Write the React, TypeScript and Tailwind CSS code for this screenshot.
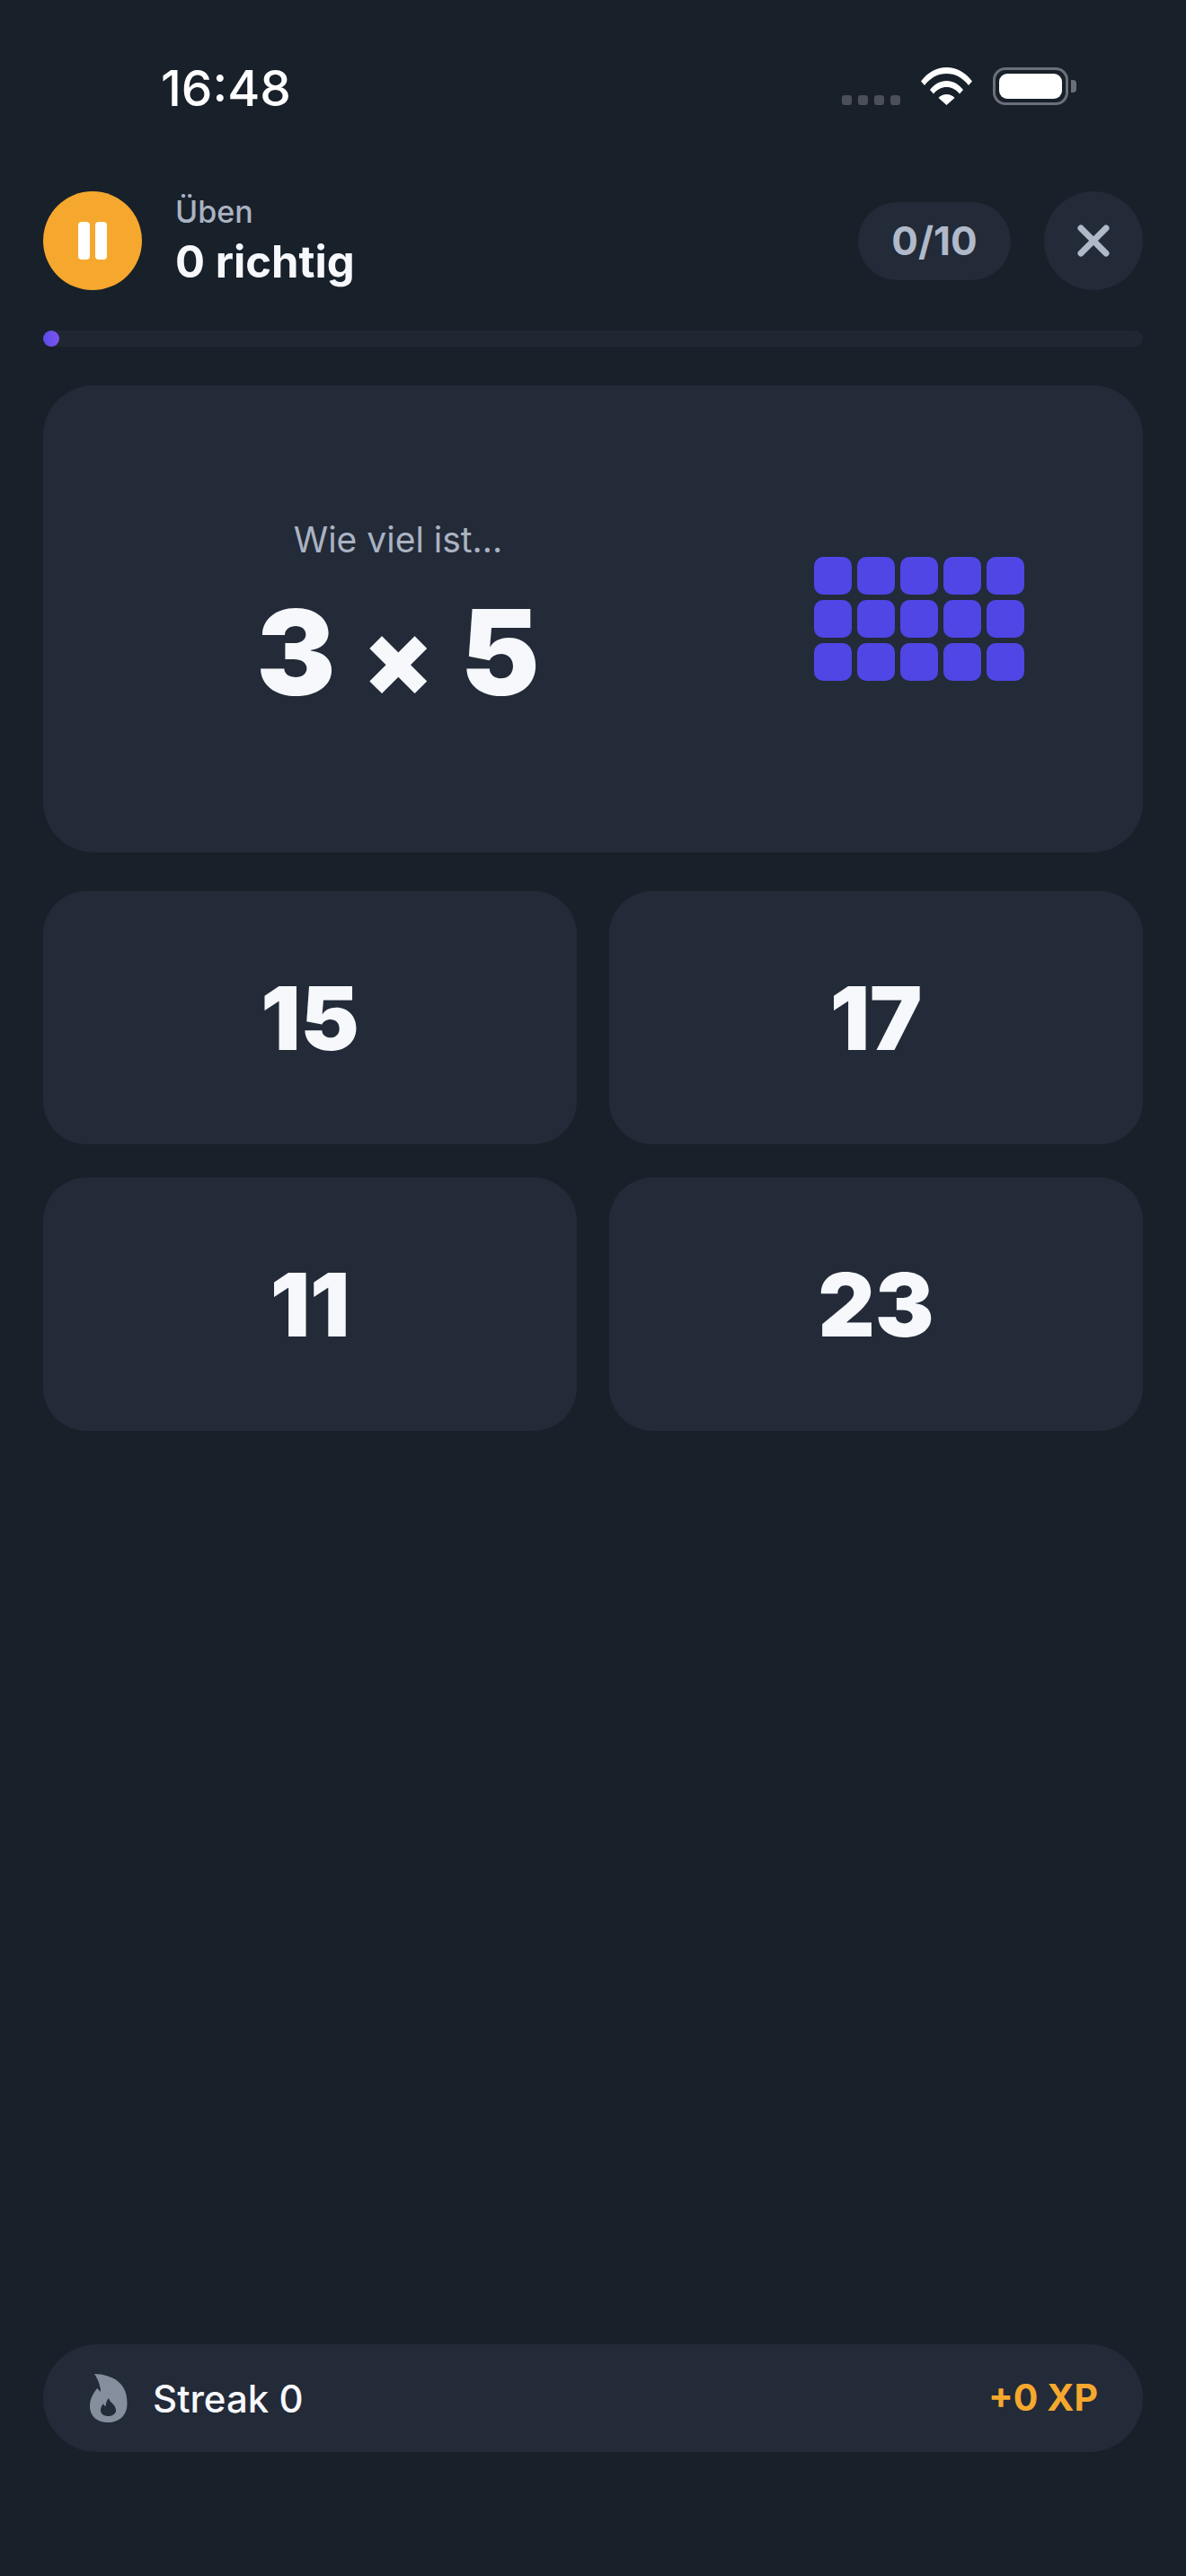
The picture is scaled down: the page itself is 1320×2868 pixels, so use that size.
import React from "react";

const inter = "font-['Inter',sans-serif]";

function StatusBar() {
    return (
        <div className="flex h-[190px] items-start pl-[179px] pr-[122px]">
            <span className="mt-[66px] text-[55px] leading-[64px] font-medium text-white">16:48</span>
            <div className="ml-auto flex items-end pt-[75px]">
                <div className="flex gap-[7px]">
                    {[0, 1, 2, 3].map((i) => (
                        <div key={i} className="h-[11px] w-[11px] rounded-[3px] bg-[#4a4f5a]" />
                    ))}
                </div>
                <svg className="ml-[23px]" width="57" height="42" viewBox="0 0 57 42" fill="#ffffff">
                    <path d="M0 15.5C7.5 5.5 17.5 0 28.5 0S49.5 5.500 57 15.5L53 20C46.500 11.500 38 7 28.5 7S10.500 11.500 4 20Z" />
                    <path d="M10 25C15 18.500 21.500 15 28.500 15S42 18.500 47 25L43 29.500C39 24.500 34 22 28.500 22S18 24.500 14 29.500Z" />
                    <path d="M19.500 34C22 31.300 25 30 28.500 30S35 31.300 37.500 34L28.500 42Z" />
                </svg>
                <div className="ml-[23px] flex items-center">
                    <div className="h-[42px] w-[84px] rounded-[14px] border-[3px] border-[#6b7078] p-[4px]">
                        <div className="h-full w-full rounded-[9px] bg-white" />
                    </div>
                    <div className="ml-[3px] h-[14px] w-[6px] rounded-r-[4px] bg-[#6b7078]" />
                </div>
            </div>
        </div>
    );
}

function Header() {
    return (
        <div className="flex items-center">
            <div className="flex h-[110px] w-[110px] items-center justify-center gap-[6px] rounded-full bg-[#f5a82d]">
                <div className="h-[42px] w-[13px] rounded-[4px] bg-white" />
                <div className="h-[42px] w-[13px] rounded-[4px] bg-white" />
            </div>
            <div className="ml-[37px] flex flex-col">
                <span className="text-[34px] leading-[40px] font-medium text-[#aab3c2]">Üben</span>
                <span className="mt-[8px] text-[49px] leading-[56px] font-bold text-[#f6f8fc]">0 richtig</span>
            </div>
            <div className="ml-auto flex h-[87px] w-[170px] items-center justify-center rounded-full bg-[#232a38] text-[44px] font-bold text-[#b0b9c9]">
                0/10
            </div>
            <div className="ml-[37px] flex h-[110px] w-[110px] items-center justify-center rounded-full bg-[#232a38]">
                <svg width="36" height="36" viewBox="0 0 36 36" fill="none" stroke="#b0b9c9" strokeWidth="7" strokeLinecap="round">
                    <path d="M4 4L32 32M32 4L4 32" />
                </svg>
            </div>
        </div>
    );
}

function Answer({ value }: { value: string }) {
    return (
        <div className="flex h-[282px] items-center justify-center rounded-[48px] bg-[#232a38] text-[98px] font-black text-[#f6f8fc]">
            {value}
        </div>
    );
}

export default function App() {
    return (
        <div className={`flex h-[2868px] w-[1320px] flex-col bg-[#18202a] ${inter}`}>
            <StatusBar />
            <div className="flex flex-1 flex-col px-[48px] pt-[23px] pb-[138px]">
                <Header />
                <div className="mt-[45px] h-[18px] rounded-full bg-[#202733]">
                    <div className="h-[18px] w-[18px] rounded-full bg-gradient-to-r from-[#5b4ae8] to-[#7c55f0]" />
                </div>
                <div className="mt-[43px] flex h-[520px] items-center rounded-[56px] bg-[#232a38] pl-[56px] pr-[132px]">
                    <div className="flex flex-1 flex-col items-center pt-[7px]">
                        <span className="text-[39px] leading-[46px] font-normal text-[#aab3c2]">Wie viel ist...</span>
                        <span className="mt-[27px] flex items-baseline text-[132px] leading-[150px] font-black text-[#f6f8fc]">
                            3<span className="mx-[30px] text-[114px]">×</span>5
                        </span>
                    </div>
                    <div className="ml-[124px] grid grid-cols-[repeat(5,42px)] gap-[6px]">
                        {Array.from({ length: 15 }).map((_, i) => (
                            <div key={i} className="h-[42px] rounded-[10px] bg-[#4f46e5]" />
                        ))}
                    </div>
                </div>
                <div className="mt-[43px] grid grid-cols-2 gap-x-[36px] gap-y-[37px]">
                    <Answer value="15" />
                    <Answer value="17" />
                    <Answer value="11" />
                    <Answer value="23" />
                </div>
                <div className="mt-auto flex h-[120px] items-center rounded-full bg-[#232a38] pl-[52px] pr-[50px]">
                    <svg width="42" height="54" viewBox="0 0 42 54">
                        <path
                            fillRule="evenodd"
                            fill="#858e9c"
                            d="M5 0C14 0 28 3 35 12C40 18 41.500 25 41.500 33C41.500 46 33 54 20 54C8 54 0 47 0 36C0 28 3 23 8 16C10 18 11 19 12 20C12 13 9 6 5 0ZM21 27C22 31 25 32 27 35C29 38 29 40 29 42C27 46 24 47 20.500 47C16 47 12 45 12 40C12 37 13.500 35 15 33C15.500 35 16.500 36 17.500 36C18 32 19 29 21 27Z"
                        />
                    </svg>
                    <span className="ml-[28px] text-[42px] font-medium text-[#f6f8fc]">Streak 0</span>
                    <span className="ml-auto text-[41px] font-bold text-[#f5a82d]">+0 XP</span>
                </div>
            </div>
        </div>
    );
}
